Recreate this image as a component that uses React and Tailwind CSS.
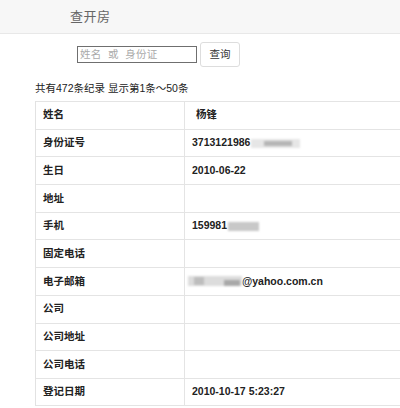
import React from "react";

const font = { fontFamily: '"Liberation Sans", "Noto Sans CJK SC", sans-serif' };

const rows = [
  ["姓名", <span className="pl-[4px]">杨锋</span>],
  [
    "身份证号",
    <span className="flex items-center">
      3713121986
      <span className="relative ml-[1px] inline-block h-[9px] w-[49px] bg-[#e6e6e6] blur-[1px]">
        <span className="absolute left-[13px] top-[2px] h-[5px] w-[28px] bg-[#b5b5b5]" />
      </span>
    </span>,
  ],
  ["生日", "2010-06-22"],
  ["地址", ""],
  [
    "手机",
    <span className="flex items-center">
      159981
      <span className="ml-[1px] inline-block h-[9px] w-[31px] bg-[#c8c8c8] blur-[1px]" />
    </span>,
  ],
  ["固定电话", ""],
  [
    "电子邮箱",
    <span className="flex items-center -ml-[4px]">
      <span className="relative inline-block h-[10px] w-[54px] bg-[#dcdcdc] blur-[1px]">
        <span className="absolute left-[6px] top-[1px] h-[8px] w-[10px] bg-[#bdbdbd]" />
        <span className="absolute left-[36px] top-[4px] h-[6px] w-[16px] bg-[#a8a8a8]" />
      </span>
      @yahoo.com.cn
    </span>,
  ],
  ["公司", ""],
  ["公司地址", ""],
  ["公司电话", ""],
  ["登记日期", "2010-10-17 5:23:27"],
];

export default function App() {
  return (
    <div className="w-[400px] h-[408px] overflow-hidden bg-white" style={font}>
      <div className="h-[34px] bg-[#f7f7f7] border-b border-[#e8e8e8] flex items-center pl-[70px]">
        <span className="text-[13px] text-[#666] tracking-[0.5px]">查开房</span>
      </div>
      <div className="flex items-center pl-[77px] pt-[8px] h-[33px]">
        <div className="w-[120px] h-[17px] border border-[#6f6f6f] flex items-center pl-[2px]">
          <span className="text-[10.5px] text-[#aaa] whitespace-pre tracking-[0.3px]">姓名  或  身份证</span>
        </div>
        <div className="ml-[3px] w-[40px] h-[25px] border border-[#ddd] rounded-[3px] flex items-center justify-center">
          <span className="text-[10.5px] text-[#333]">查询</span>
        </div>
      </div>
      <div className="pl-[35px] h-[34px] pt-[14px] text-[10.5px] text-[#222] leading-[14px]">
        共有472条纪录 显示第1条～50条
      </div>
      <div className="ml-[35px] w-[400px] border-l border-[#e2e2e2]">
        {rows.map(([k, v], i) => (
          <div
            key={i}
            className={
              "flex h-[27.7px] border-t border-[#e4e4e4] text-[10.5px] font-bold text-[#222] " +
              (i === rows.length - 1 ? "border-b" : "")
            }
          >
            <div className="w-[149px] shrink-0 flex items-center pl-[7px] border-r border-[#e4e4e4]">{k}</div>
            <div className="flex items-center pl-[7px]">{v}</div>
          </div>
        ))}
      </div>
    </div>
  );
}
